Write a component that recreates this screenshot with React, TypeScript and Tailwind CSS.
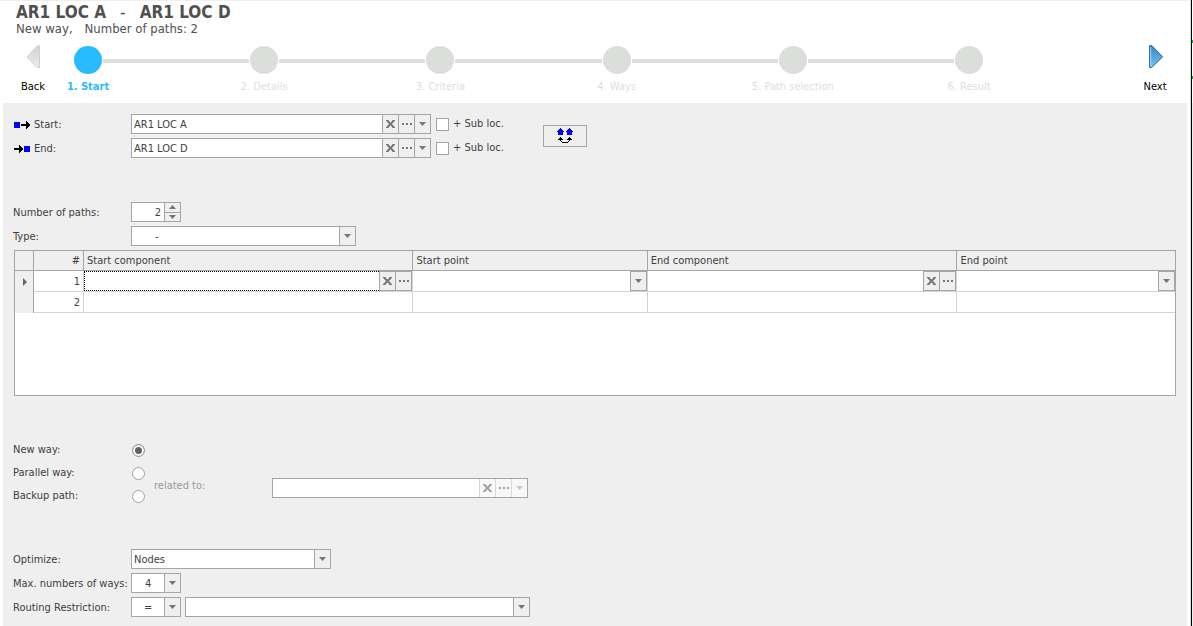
import { Fragment, useState } from "react";
import type { ReactNode } from "react";

const steps = ["1. Start", "2. Details", "3. Criteria", "4. Ways", "5. Path selection", "6. Result"];

function ClearIcon() {
  return (
    <svg width="9" height="8" viewBox="0 0 9 8" fill="none" stroke="currentColor" strokeWidth="2" aria-hidden="true">
      <path d="M1.500 1 7.500 7M7.500 1 1.500 7" />
      <path d="M0 .6h2.6M6.4 .6H9M0 7.4h2.6M6.4 7.4H9" strokeWidth="1.1" />
    </svg>
  );
}

function DotsIcon() {
  return (
    <svg width="10" height="2" viewBox="0 0 10 2" fill="currentColor" aria-hidden="true">
      <path d="M0 0h2v2H0zM4 0h2v2H4zM8 0h2v2H8z" />
    </svg>
  );
}

function DownIcon() {
  return (
    <svg width="7" height="4" viewBox="0 0 7 4" fill="currentColor" aria-hidden="true">
      <path d="M0 0h7L3.5 4z" />
    </svg>
  );
}

function UpIcon() {
  return (
    <svg width="7" height="4" viewBox="0 0 7 4" fill="currentColor" aria-hidden="true">
      <path d="M0 4h7L3.5 0z" />
    </svg>
  );
}

function ArrowShape({ x }: { x: number }) {
  return <path fill="#000" d={`M${x} 4h5V1h1v1h1v1h1v1h1v2h-1v1h-1v1h-1v1h-1V6h-5z`} />;
}

function StartIcon() {
  return (
    <svg width="17" height="10" viewBox="0 0 17 10" aria-hidden="true">
      <path fill="#00f" d="M1 2h6v6H1z" />
      <ArrowShape x={8} />
    </svg>
  );
}

function EndIcon() {
  return (
    <svg width="17" height="10" viewBox="0 0 17 10" aria-hidden="true">
      <ArrowShape x={1} />
      <path fill="#00f" d="M11 2h6v6h-6z" />
    </svg>
  );
}

function SwapIcon() {
  return (
    <svg width="16" height="16" viewBox="0 0 16 16" aria-hidden="true">
      <path fill="#00f" d="M3 0h1v1h1v1h1v1h1v1H6v3H1V4H0V3h1V2h1V1h1zM12 0h1v1h1v1h1v1h1v1h-1v3h-5V4H9V3h1V2h1V1h1z" />
      <path d="M3 9h1v1h1v1h1v1H4v1h1v1h1v1H5v-1H4v-1H3v-1H1v-1h1v-1h1zM12 9h1v1h1v1h1v1h-2v1h-1v1h-1v1h-1v-1h1v-1h1v-1h-2v-1h1v-1h1zM5 14h6v1H5z" />
    </svg>
  );
}

function FieldButton({ label, muted, children }: { label: string; muted?: boolean; children: ReactNode }) {
  return (
    <button
      type="button"
      aria-label={label}
      disabled={muted}
      className={
        muted
          ? "flex w-4 shrink-0 items-center justify-center border-l border-[#d8d8d8] bg-[#f8f8f8] text-[#a0a0a0] last:text-[#c8c8c8]"
          : "flex w-4 shrink-0 items-center justify-center border-l border-[#a5a5a5] bg-[#efefef] text-[#757575]"
      }
    >
      {children}
    </button>
  );
}

function LookupField({ id, value, muted, width }: { id: string; value: string; muted?: boolean; width: string }) {
  return (
    <div className={`flex h-5 border border-[#a5a5a5] bg-white ${width}`}>
      <input id={id} defaultValue={value} disabled={muted} className="min-w-0 flex-1 bg-white px-0.5 pt-px outline-none" />
      <FieldButton label="Clear" muted={muted}><ClearIcon /></FieldButton>
      <FieldButton label="Browse" muted={muted}><DotsIcon /></FieldButton>
      <FieldButton label="Open list" muted={muted}><DownIcon /></FieldButton>
    </div>
  );
}

function SelectField({ id, label, options, width, inset }: { id: string; label?: string; options: string[]; width: string; inset: string }) {
  return (
    <div className={`relative h-5 ${width}`}>
      <select id={id} aria-label={label} className={`block h-5 w-full appearance-none border border-[#a5a5a5] bg-white pt-px pr-4 outline-none ${inset}`}>
        {options.map((o) => (
          <option key={o}>{o}</option>
        ))}
      </select>
      <span className="pointer-events-none absolute inset-y-0 right-0 flex w-[17px] items-center justify-center border border-[#a5a5a5] bg-[#efefef] text-[#757575]">
        <DownIcon />
      </span>
    </div>
  );
}

function Row({ id, label, icon, children }: { id: string; label: string; icon?: ReactNode; children: ReactNode }) {
  return (
    <div className="flex h-5 items-center">
      <label htmlFor={id} className="flex h-5 w-[118px] shrink-0 items-center gap-1 pt-px whitespace-nowrap">
        {icon}
        {label}
      </label>
      {children}
    </div>
  );
}

function SubLoc() {
  return (
    <label className="ml-[5px] flex items-center gap-1 whitespace-nowrap">
      <input type="checkbox" className="size-[13px] appearance-none border border-[#a5a5a5] bg-white checked:bg-[#666]" />
      + Sub loc.
    </label>
  );
}

function ComponentCell({ row, name }: { row: number; name: string }) {
  const first = row === 1;
  return (
    <div className="flex h-5">
      <input
        aria-label={`${name} ${row}`}
        className={
          first && name === "Start component"
            ? "min-w-0 flex-1 border border-r-0 border-dotted border-black bg-white px-1 outline-none"
            : "min-w-0 flex-1 bg-white px-1 outline-none"
        }
      />
      {first && (
        <div className="flex border-y border-r border-[#a5a5a5]">
          <FieldButton label="Clear"><ClearIcon /></FieldButton>
          <FieldButton label="Browse"><DotsIcon /></FieldButton>
        </div>
      )}
    </div>
  );
}

function PointCell({ row, name }: { row: number; name: string }) {
  return (
    <div className="flex h-5">
      <input aria-label={`${name} ${row}`} className="min-w-0 flex-1 bg-white px-1 outline-none" />
      {row === 1 && (
        <div className="flex border-y border-r border-[#a5a5a5]">
          <FieldButton label="Open list"><DownIcon /></FieldButton>
        </div>
      )}
    </div>
  );
}

function PathsTable() {
  const head = "h-5 border-b border-[#a5a5a5] p-0 font-normal";
  const cell = "h-[21px] border-b border-[#d3d3d3] p-0 align-top";
  return (
    <div className="ml-px h-[146px] border border-[#a5a5a5] bg-white">
      <table className="w-full table-fixed border-separate border-spacing-0">
        <colgroup>
          <col className="w-[19px]" />
          <col className="w-[50px]" />
          <col className="w-[28.4%]" />
          <col className="w-[20.2%]" />
          <col className="w-[26.7%]" />
          <col />
        </colgroup>
        <thead className="bg-[#efefef]">
          <tr>
            <th aria-label="Current row" className={`${head} border-r`} />
            <th className={`${head} border-r pr-[3px] text-right`}>#</th>
            <th className={`${head} border-r pl-[3px] text-left`}>Start component</th>
            <th className={`${head} border-r pl-[3px] text-left`}>Start point</th>
            <th className={`${head} border-r pl-[3px] text-left`}>End component</th>
            <th className={`${head} pl-[3px] text-left`}>End point</th>
          </tr>
        </thead>
        <tbody>
          {[1, 2].map((n) => (
            <tr key={n}>
              <td className="h-[21px] border-r border-[#a5a5a5] bg-[#efefef] p-0">
                {n === 1 && (
                  <svg className="ml-2" width="4" height="8" viewBox="0 0 4 8" fill="#666" aria-hidden="true">
                    <path d="M0 0 4 4 0 8z" />
                  </svg>
                )}
              </td>
              <td className="h-[21px] border-r border-b border-[#d3d3d3] p-0 pt-0.5 pr-[3px] text-right">{n}</td>
              <td className={`${cell} border-r`}><ComponentCell row={n} name="Start component" /></td>
              <td className={`${cell} border-r`}><PointCell row={n} name="Start point" /></td>
              <td className={`${cell} border-r`}><ComponentCell row={n} name="End component" /></td>
              <td className={cell}><PointCell row={n} name="End point" /></td>
            </tr>
          ))}
        </tbody>
      </table>
    </div>
  );
}

function Header() {
  return (
    <header className="h-[103px] border-t border-[#efefef] bg-white">
      <h1 className="flex h-5 items-center gap-[14px] pt-px pl-[15px] text-[17px] font-bold whitespace-nowrap text-[#505050]">
        <span>AR1 LOC A</span>
        <span className="font-normal">-</span>
        <span>AR1 LOC D</span>
      </h1>
      <p className="flex h-4 items-center gap-3 pl-[15px] text-[13px] whitespace-nowrap text-[#505050]">
        <span>New way,</span>
        <span>Number of paths: 2</span>
      </p>
      <div className="flex items-start pt-2">
        <button type="button" className="flex w-16 shrink-0 flex-col items-center text-black">
          <svg width="16" height="24" viewBox="0 0 16 24" aria-hidden="true">
            <defs>
              <linearGradient id="backFill" x1="0" y1="0" x2="0" y2="1">
                <stop offset="0" stopColor="#d2d2d2" />
                <stop offset="1" stopColor="#ececec" />
              </linearGradient>
            </defs>
            <path d="M14.500 .8V22.500H12L2 12 12.500 .8z" fill="url(#backFill)" stroke="#cfcfcf" strokeWidth="1" />
          </svg>
          <span className="mt-2.5 h-4 leading-4">Back</span>
        </button>
        <ol className="ml-[9px] flex flex-1 items-start pt-px">
          {steps.map((s, i) => (
            <Fragment key={s}>
              {i > 0 && <li aria-hidden="true" className="mx-px mt-[13px] h-1 flex-1 bg-[#dcdedc]" />}
              <li className="flex w-7 flex-col items-center">
                <span className={i === 0 ? "size-7 rounded-full bg-[#2abaff]" : "size-7 rounded-full bg-[#dcdedc]"} />
                <span
                  className={
                    i === 0
                      ? "mt-[5px] h-4 leading-4 font-bold whitespace-nowrap text-[#2abaff]"
                      : "mt-[5px] h-4 leading-4 whitespace-nowrap text-[#dcdedc]"
                  }
                >
                  {s}
                </span>
              </li>
            </Fragment>
          ))}
        </ol>
        <button type="button" className="mr-1 ml-[141px] flex w-[62px] shrink-0 flex-col items-center text-black">
          <svg width="16" height="24" viewBox="0 0 16 24" aria-hidden="true">
            <defs>
              <linearGradient id="nextFill" x1="0" y1="0" x2="0" y2="1">
                <stop offset="0" stopColor="#3384bd" />
                <stop offset="1" stopColor="#7cc4f2" />
              </linearGradient>
            </defs>
            <path d="M3.500 2v21.500L16 12.500" fill="none" stroke="#ccc" strokeWidth="1" />
            <path d="M2.500 .7V22.500H4.500L15.500 11.700 5 .7z" fill="url(#nextFill)" stroke="#2d72a8" strokeWidth="1" />
            <path d="M3.700 2V21.200" stroke="#a5d4f2" strokeWidth="1" />
          </svg>
          <span className="mt-2.5 h-4 leading-4">Next</span>
        </button>
      </div>
    </header>
  );
}

function WayTypes() {
  const [way, setWay] = useState("New way:");
  return (
    <div className="mt-11 flex items-start">
      <div className="flex flex-col gap-[3px]">
        {["New way:", "Parallel way:", "Backup path:"].map((w) => (
          <label key={w} className="flex h-5 items-center">
            <span className="w-[119px]">{w}</span>
            <input
              type="radio"
              name="way"
              checked={way === w}
              onChange={() => setWay(w)}
              className="size-[13px] appearance-none rounded-full border border-[#a0a0a0] bg-white checked:bg-[#606060] checked:shadow-[inset_0_0_0_2px_white]"
            />
          </label>
        ))}
      </div>
      <div className="mt-[38px] ml-[9px] flex items-center">
        <label htmlFor="related" className="mb-1 w-[118px] text-[#999]">related to:</label>
        <LookupField id="related" value="" muted width="w-[256px]" />
      </div>
    </div>
  );
}

export default function App() {
  return (
    <div className="flex min-h-screen bg-white pl-px font-['DejaVu_Sans_Condensed','Noto_Sans',sans-serif] text-[11px] leading-4 text-[#404040]">
      <div className="flex min-w-0 flex-1 flex-col">
        <Header />
        <main className="mr-[3px] ml-0.5 flex-1 bg-[#efefef] pt-[11px] pr-[11px] pb-2 pl-[10px]">
          <div className="flex items-center">
            <div className="flex flex-col gap-1">
              <Row id="start" label="Start:" icon={<StartIcon />}>
                <LookupField id="start" value="AR1 LOC A" width="w-[300px]" />
                <SubLoc />
              </Row>
              <Row id="end" label="End:" icon={<EndIcon />}>
                <LookupField id="end" value="AR1 LOC D" width="w-[300px]" />
                <SubLoc />
              </Row>
            </div>
            <button type="button" aria-label="Swap start and end" className="ml-[39px] flex h-[22px] w-11 items-center justify-center border border-[#a5a5a5]">
              <SwapIcon />
            </button>
          </div>

          <div className="mt-11 mb-1 flex flex-col gap-1">
            <Row id="count" label="Number of paths:">
              <div className="flex h-5 w-[50px] border border-[#a5a5a5] bg-white">
                <input id="count" defaultValue="2" className="w-8 min-w-0 flex-1 pt-px pr-[3px] text-right outline-none" />
                <div className="flex w-4 flex-col border-l border-[#a5a5a5] bg-[#efefef] text-[#757575]">
                  <button type="button" aria-label="More paths" className="flex flex-1 items-center justify-center border-b border-[#a5a5a5]"><UpIcon /></button>
                  <button type="button" aria-label="Fewer paths" className="flex flex-1 items-center justify-center"><DownIcon /></button>
                </div>
              </div>
            </Row>
            <Row id="type" label="Type:">
              <SelectField id="type" options={["-"]} width="w-[225px]" inset="pl-[23px]" />
            </Row>
          </div>

          <PathsTable />

          <WayTypes />

          <div className="mt-[43px] flex flex-col gap-1">
            <Row id="optimize" label="Optimize:">
              <SelectField id="optimize" options={["Nodes"]} width="w-[200px]" inset="pl-0.5" />
            </Row>
            <Row id="max" label="Max. numbers of ways:">
              <SelectField id="max" options={["4"]} width="w-[50px]" inset="pl-[13px]" />
            </Row>
            <Row id="restriction" label="Routing Restriction:">
              <SelectField id="restriction" options={["="]} width="w-[50px]" inset="pl-3" />
              <div className="ml-1">
                <SelectField id="restriction-value" label="Restriction value" options={[""]} width="w-[345px]" inset="pl-0.5" />
              </div>
            </Row>
          </div>
        </main>
      </div>
      <div className="w-0.5 border-r border-l border-r-black border-l-[#d8d8d8]" />
      <div className="flex w-px flex-col bg-[#efefef]">
        <div className="h-10 bg-white" />
        <div className="h-[3px] bg-[#12a83c]" />
        <div className="h-[33px] bg-white" />
        <div className="h-[3px] bg-[#12a83c]" />
        <div className="h-6 bg-white" />
      </div>
    </div>
  );
}
